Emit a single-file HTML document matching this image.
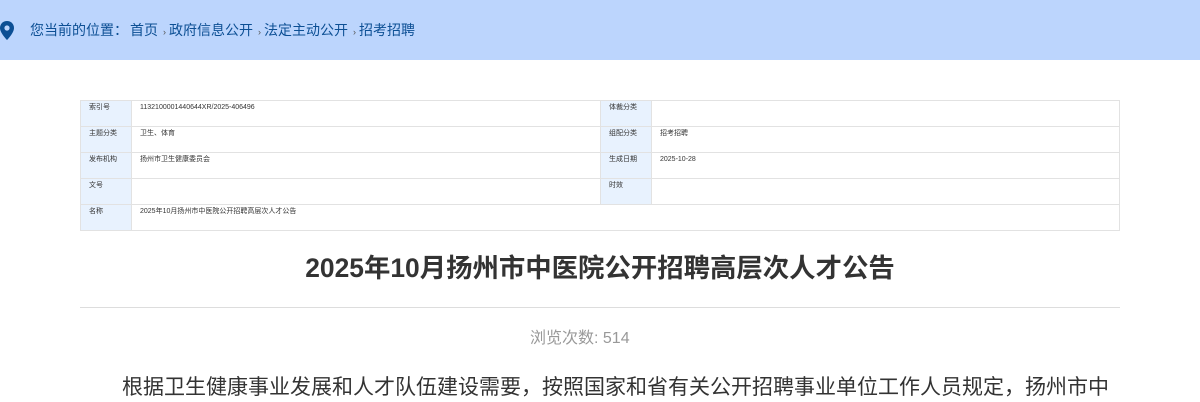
<!DOCTYPE html>
<html><head><meta charset="utf-8"><style>
body{margin:0;width:1200px;height:400px;overflow:hidden;background:#fff;font-family:"Liberation Sans","Noto Sans CJK SC",sans-serif;}
.bar{position:absolute;left:0;top:0;width:1200px;height:60px;background:#bcd5fd;}
.crumb{position:absolute;left:30px;top:21px;font-size:14px;color:#0c4f94;white-space:nowrap;line-height:18px;}
.crumb .s{font-size:9px;color:#555;margin:0 3px 0 5px;}
table{position:absolute;left:80px;top:100px;width:1040px;border-collapse:collapse;font-size:7px;color:#333;}
td{border:1px solid #e2e2e2;height:22px;vertical-align:top;padding:3px 8px 0;line-height:8px;box-sizing:content-box;}
td.l{background:#e8f2fe;width:34px;}
.title{position:absolute;left:0;width:1200px;top:250px;text-align:center;font-size:26.4px;font-weight:bold;color:#333;line-height:36px;}
.hr{position:absolute;left:80px;top:307px;width:1040px;height:1px;background:#ddd;}
.views{position:absolute;left:530px;top:329px;font-size:16px;color:#999;line-height:20px;white-space:nowrap;}
.p{position:absolute;left:122px;top:374px;font-size:21px;color:#333;white-space:nowrap;line-height:28px;}
</style></head><body>
<div class="bar"></div>
<svg style="position:absolute;left:0;top:21px" width="14" height="19" viewBox="0 0 14 19"><path d="M7 0C3 0 0 3 0 7c0 5 7 12 7 12s7-7 7-12C14 3 11 0 7 0z" fill="#0c4f94"/><circle cx="7" cy="7" r="2.6" fill="#bcd5fd"/></svg>
<div class="crumb">您当前的位置：<span style="margin-left:2px">首页</span><span class="s">›</span>政府信息公开<span class="s">›</span>法定主动公开<span class="s">›</span>招考招聘</div>
<table>
<tr><td class="l">索引号</td><td style="width:452px">1132100001440644XR/2025-406496</td><td class="l">体裁分类</td><td></td></tr>
<tr><td class="l">主题分类</td><td>卫生、体育</td><td class="l">组配分类</td><td>招考招聘</td></tr>
<tr><td class="l">发布机构</td><td>扬州市卫生健康委员会</td><td class="l">生成日期</td><td>2025-10-28</td></tr>
<tr><td class="l">文号</td><td></td><td class="l">时效</td><td></td></tr>
<tr><td class="l">名称</td><td colspan="3">2025年10月扬州市中医院公开招聘高层次人才公告</td></tr>
</table>
<div class="title">2025年10月扬州市中医院公开招聘高层次人才公告</div>
<div class="hr"></div>
<div class="views">浏览次数: 514</div>
<div class="p">根据卫生健康事业发展和人才队伍建设需要，按照国家和省有关公开招聘事业单位工作人员规定，扬州市中</div>
</body></html>
